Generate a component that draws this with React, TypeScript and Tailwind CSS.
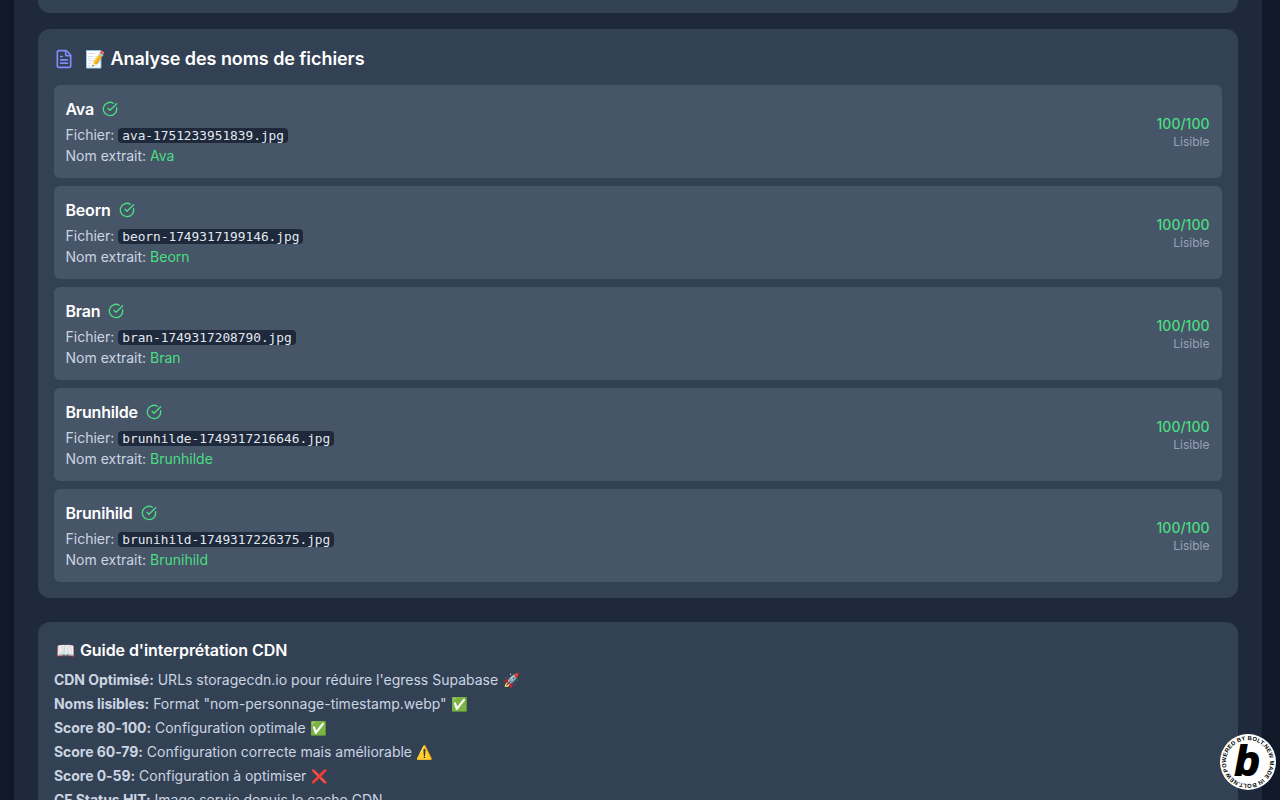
import { CircleCheckBig, FileText } from "lucide-react";

type FileRow = { name: string; file: string };

const FILES: FileRow[] = [
  { name: "Ava", file: "ava-1751233951839.jpg" },
  { name: "Beorn", file: "beorn-1749317199146.jpg" },
  { name: "Bran", file: "bran-1749317208790.jpg" },
  { name: "Brunhilde", file: "brunhilde-1749317216646.jpg" },
  { name: "Brunihild", file: "brunihild-1749317226375.jpg" },
];

const GUIDE = [
  { label: "CDN Optimisé:", text: "URLs storagecdn.io pour réduire l'egress Supabase", emoji: "🚀" },
  { label: "Noms lisibles:", text: 'Format "nom-personnage-timestamp.webp"', emoji: "✅" },
  { label: "Score 80-100:", text: "Configuration optimale", emoji: "✅" },
  { label: "Score 60-79:", text: "Configuration correcte mais améliorable", emoji: "⚠️" },
  { label: "Score 0-59:", text: "Configuration à optimiser", emoji: "❌" },
  { label: "CF Status HIT:", text: "Image servie depuis le cache CDN", emoji: "" },
];

function BoltBadge() {
  return (
    <svg viewBox="0 0 56 56" className="absolute right-[4px] bottom-[10px] h-[56px] w-[56px]">
      <defs>
        <path id="ring" d="M28 28 m-22 0 a22 22 0 1 1 44 0 a22 22 0 1 1 -44 0" />
      </defs>
      <circle cx="28" cy="28" r="28" fill="#fff" />
      <text
        fontSize="5.8"
        fontWeight="700"
        fill="#000"
        fontFamily="'Liberation Sans', sans-serif"
        transform="rotate(-25 28 28)"
      >
        <textPath href="#ring" textLength="136" lengthAdjust="spacing">
          POWERED BY BOLT.NEW MADE IN BOLT.NEW
        </textPath>
      </text>
      <text
        x="27"
        y="41"
        textAnchor="middle"
        fontSize="40"
        fontWeight="700"
        fontStyle="italic"
        fill="#000"
        stroke="#000"
        strokeWidth="1.8"
        fontFamily="'Liberation Sans', sans-serif"
      >
        b
      </text>
    </svg>
  );
}

export default function App() {
  return (
    <div className="relative h-screen overflow-hidden bg-[#111827] pr-[18px] pl-[14px] font-['Inter',sans-serif]">
      <div className="h-full bg-[#1e293b] px-6">
        <div className="h-[13px] rounded-b-xl bg-[#334155]" />

        {/* Analyse des noms */}
        <section className="mt-4 rounded-xl bg-[#334155] p-4">
          <div className="mb-3 flex items-center gap-[10px]">
            <FileText className="h-5 w-5 text-[#818cf8]" />
            <h2 className="text-lg font-semibold tracking-[-0.07px] text-white">
              <span className="inline-block w-[22px] text-center text-[16.5px]">📝</span> Analyse des noms de fichiers
            </h2>
          </div>
          <div className="space-y-2">
            {FILES.map((f) => (
              <div
                key={f.file}
                className="flex items-center justify-between rounded-md bg-[#475569] py-3 pr-[12.5px] pl-[11.5px]"
              >
                <div>
                  <div className="flex items-center gap-2">
                    <span className="font-semibold tracking-[-0.2px] text-white">{f.name}</span>
                    <CircleCheckBig className="h-4 w-4 text-[#4ade80]" />
                  </div>
                  <div className="mt-1 h-[21px] text-sm text-[#cbd5e1]">
                    Fichier:{" "}
                    <code className="rounded bg-[#1e293b] px-1 font-['DejaVu_Sans_Mono',monospace] text-[12.8px] text-[#e2e8f0]">
                      {f.file}
                    </code>
                  </div>
                  <div className="text-sm text-[#cbd5e1]">
                    Nom extrait: <span className="text-[#4ade80]">{f.name}</span>
                  </div>
                </div>
                <div className="text-right">
                  <div className="text-sm font-medium text-[#4ade80]">100/100</div>
                  <div className="text-xs text-[#94a3b8]">Lisible</div>
                </div>
              </div>
            ))}
          </div>
        </section>

        {/* Guide */}
        <section className="mt-6 rounded-xl bg-[#334155] p-4">
          <h3 className="mb-2 font-semibold tracking-[-0.08px] text-white">
            <span className="inline-block w-[22px] text-center text-[15.5px]">📖</span> Guide d'interprétation CDN
          </h3>
          <div className="space-y-1 text-sm text-[#cbd5e1]">
            {GUIDE.map((g) => (
              <p key={g.label} className="h-5">
                <strong className="font-bold tracking-[-0.05px]">{g.label}</strong> {g.text}{" "}
                {g.emoji && <span className="inline-block w-[18px] text-center text-[13.5px]">{g.emoji}</span>}
              </p>
            ))}
          </div>
        </section>
      </div>
      <BoltBadge />
    </div>
  );
}
